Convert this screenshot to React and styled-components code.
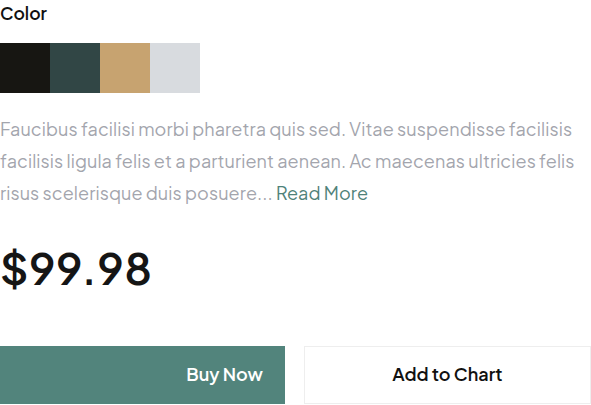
import React from 'react'
import styled, { createGlobalStyle } from 'styled-components'

const GlobalStyle = createGlobalStyle`
  body {
    margin: 0;
    background: #ffffff;
    font-family: "Plus Jakarta Sans", Inter, "Noto Sans", sans-serif;
  }
`;

const colors = ['#171612', '#314645', '#c7a370', '#d8dbdf'];

const App = () => {
  return (
    <>
      <GlobalStyle />
      <Wrapper>
        <Label>Color</Label>
        <Swatches>
          {colors.map((c) => (
            <Swatch key={c} $color={c} />
          ))}
        </Swatches>
        <Description>
          Faucibus facilisi morbi pharetra quis sed. Vitae suspendisse facilisis facilisis ligula felis et a parturient aenean. Ac maecenas ultricies felis risus scelerisque duis posuere... <ReadMore href="#">Read More</ReadMore>
        </Description>
        <Price>$99.98</Price>
        <Actions>
          <BuyButton>Buy Now</BuyButton>
          <CartButton>Add to Chart</CartButton>
        </Actions>
      </Wrapper>
    </>
  )
}

export default App

const Wrapper = styled.div`
width: 591px;
display: flex;
flex-direction: column;
`;
const Label = styled.h4`
margin: 0;
padding-top: 1px;
font-size: 17.5px;
font-weight: 600;
line-height: 24px;
color: #111;
`;
const Swatches = styled.div`
display: flex;
margin-top: 18px;
`;
const Swatch = styled.div`
width: 50px;
height: 50px;
background: ${(props) => props.$color};
`;
const Description = styled.p`
margin: 20px 0 0;
font-size: 18px;
line-height: 32px;
letter-spacing: 0.1px;
color: #a3a5ad;
`;
const ReadMore = styled.a`
color: #4f8279;
text-decoration: none;
`;
const Price = styled.div`
margin-top: 30px;
font-size: 44px;
font-weight: 600;
line-height: 56px;
color: #151515;
letter-spacing: 0.5px;
`;
const Actions = styled.div`
display: grid;
grid-template-columns: 285px 1fr;
gap: 19px;
margin-top: 51px;
`;
const BuyButton = styled.button`
all: unset;
height: 58px;
background: #52847c;
color: #fff;
font-size: 18px;
font-weight: 600;
display: flex;
align-items: center;
justify-content: flex-end;
padding: 0 22px 3px 0;
box-sizing: border-box;
cursor: pointer;
`;
const CartButton = styled.button`
all: unset;
height: 58px;
box-sizing: border-box;
border: 1px solid #eeeeee;
color: #111;
font-size: 18px;
font-weight: 600;
display: flex;
align-items: center;
justify-content: center;
padding-bottom: 3px;
cursor: pointer;
`;
